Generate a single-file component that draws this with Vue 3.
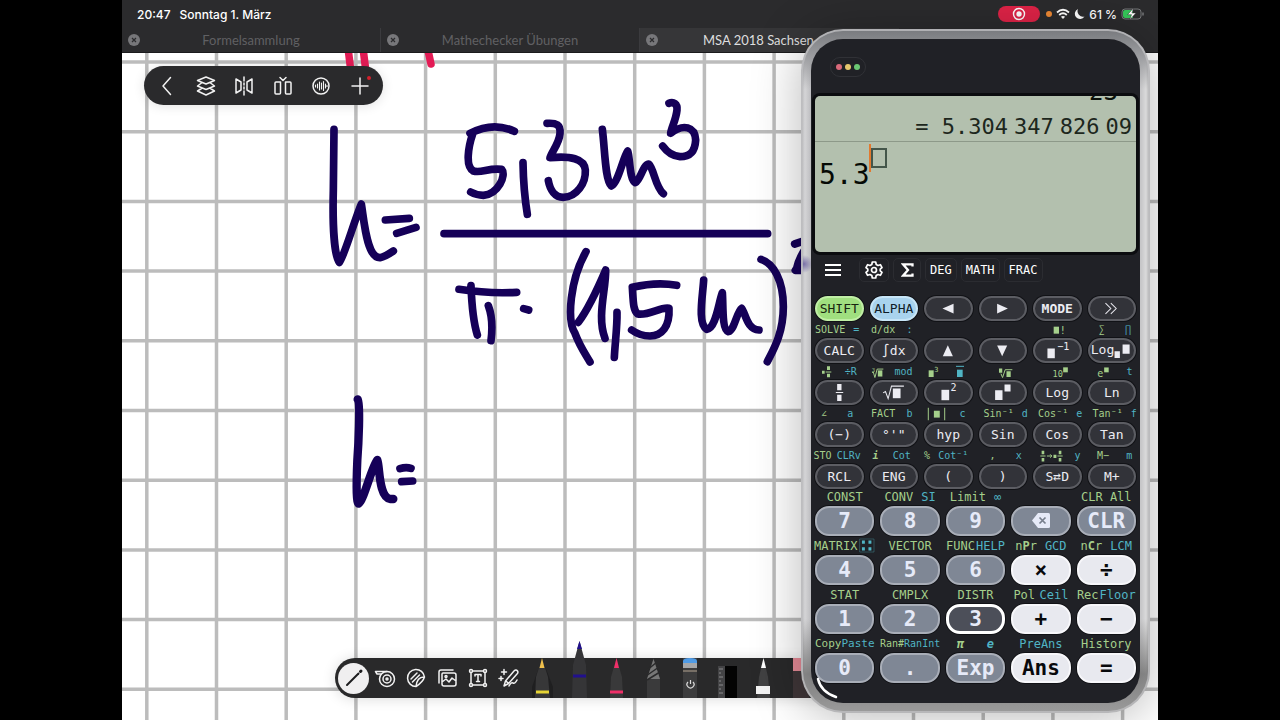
<script setup>
import { h, ref } from 'vue'

const box = (x, y, w, ht) => `M${x} ${y}h${w}v${ht}h${-w}z`

// Each glyph: view box, filled shapes, stroked shapes and small texts (three units per pixel).
const glyphs = {
  left: { v: [359, 34, 146, 74], f: 'M414 71L447 57V86z' },
  right: { v: [27, 34, 146, 74], f: 'M116 71L84 57V86z' },
  up: { v: [359, 158, 146, 74], f: 'M430 179L415 212H445z' },
  down: { v: [27, 158, 146, 74], f: 'M99 212L84 180H114z' },
  more: { v: [353, 34, 146, 74], s: 'M408 55L424 71L408 87M424 55L440 71L424 87' },
  frac: { v: [31, 283, 146, 74], f: box(97, 295, 13, 18) + box(97, 327, 13, 18), s: 'M93 320H115' },
  sqrt: { v: [195, 283, 146, 74], f: box(266, 308, 23, 29), s: 'M237 321L244 317L252 338L262 301H299' },
  square: { v: [359, 283, 146, 74], f: box(411, 312, 23, 31), t: [[438, 317, 30, '2']] },
  power: { v: [27, 283, 146, 74], f: box(78, 313, 22, 29) + box(106, 296, 18, 21) },
  inverse: { v: [190, 158, 146, 74], f: box(233, 189, 22, 29), t: [[262, 195, 30, '−1']] },
  logBase: { v: [353, 158, 146, 74], f: box(435, 197, 16, 20) + box(459, 177, 21, 28), t: [[364, 204, 39, 'Log']] },
  mixed: { v: [48, 236, 42, 42], f: box(60, 253, 8, 9) + box(75, 240, 9, 11) + box(75, 262, 9, 11), s: 'M71 257H88' },
  cbrt: { v: [210, 236, 40, 42], f: box(231, 252, 14, 19), s: 'M213 259L217 257L222 274L229 248H248', t: [[212, 256, 17, '3']] },
  cube: { v: [376, 236, 36, 42], f: box(378, 252, 15, 20), t: [[395, 257, 21, '3']] },
  mean: { v: [450, 236, 30, 42], f: box(456, 250, 17, 22), s: 'M453 240H477' },
  abs: { v: [370, 360, 58, 42], f: box(391, 371, 18, 21), s: 'M374 362V400M424 362V400' },
  factorial: { v: [242, 112, 42, 42], f: box(244, 123, 16, 21), t: [[262, 145, 30, '!']] },
  nroot: { v: [78, 236, 46, 42], f: box(81, 246, 10, 13) + box(104, 255, 13, 17), s: 'M87 262L92 274L100 250H122' },
  tenPow: { v: [238, 236, 50, 42], f: box(271, 243, 14, 15), t: [[239, 272, 26, '10']] },
  ePow: { v: [367, 236, 40, 42], f: box(389, 243, 14, 15), t: [[368, 272, 31, 'e']] },
  convert: {
    v: [204, 485, 70, 42],
    f: box(209, 490, 8, 11) + box(209, 512, 8, 11) + box(245, 502, 9, 10) + box(261, 490, 8, 11) + box(261, 512, 8, 11),
    s: 'M205 506H221M225 506H240M235 501L240 506L235 511M257 506H273'
  },
  matrix: {
    v: [160, 158, 52, 46],
    f: box(172, 166, 9, 10) + box(192, 166, 9, 10) + box(172, 186, 9, 10) + box(192, 186, 9, 10),
    s: 'M165 161H209V201H165z', sw: 1
  }
}

const Glyph = (props) => {
  if (props.name === 'erase') {
    return h('svg', { width: 20, height: 18, viewBox: '0 0 20 18', 'aria-hidden': 'true' }, [
      h('path', { d: 'M7 1H17.500Q19 1 19 2.500V14.500Q19 16 17.500 16H7L1 8.500z', fill: 'currentColor' }),
      h('path', { d: 'M8.500 5.500L14.500 11.500M14.500 5.500L8.500 11.500', stroke: '#777f8d', 'stroke-width': 1.700 })
    ])
  }
  const g = glyphs[props.name]
  return h('svg', { width: Math.round(g.v[2] / 3), height: Math.round(g.v[3] / 3), viewBox: g.v.join(' '), 'aria-hidden': 'true' }, [
    g.s && h('path', { d: g.s, fill: 'none', stroke: 'currentColor', 'stroke-width': g.sw || 3 }),
    g.f && h('path', { d: g.f, fill: 'currentColor' }),
    ...(g.t || []).map(([x, y, size, str]) => h('text', { x, y, 'font-size': size, fill: 'currentColor' }, str))
  ])
}
Glyph.props = ['name']

const fnRows = [
  [{ k: 'SHIFT', c: 'shift' }, { k: 'ALPHA', c: 'alpha' }, { g: 'left' }, { g: 'right' }, { k: 'MODE', c: 'strong' }, { g: 'more' }],
  [
    { k: 'CALC', s: 'SOLVE', a: '=' }, { k: '∫dx', s: 'd/dx', a: ':' }, { g: 'up' }, { g: 'down' },
    { g: 'inverse', sg: 'factorial' }, { g: 'logBase', s: '∑', a: '∏' }
  ],
  [
    { g: 'frac', sg: 'mixed', a: '÷R' }, { g: 'sqrt', sg: 'cbrt', a: 'mod' }, { g: 'square', sg: 'cube', ag: 'mean' },
    { g: 'power', sg: 'nroot' }, { k: 'Log', sg: 'tenPow' }, { k: 'Ln', sg: 'ePow', a: 't' }
  ],
  [
    { k: '(−)', s: '∠', a: 'a' }, { k: '°\'"', s: 'FACT', a: 'b' }, { k: 'hyp', sg: 'abs', a: 'c' },
    { k: 'Sin', s: 'Sin⁻¹', a: 'd' }, { k: 'Cos', s: 'Cos⁻¹', a: 'e' }, { k: 'Tan', s: 'Tan⁻¹', a: 'f' }
  ],
  [
    { k: 'RCL', s: 'STO', a: 'CLRv' }, { k: 'ENG', s: 'i', a: 'Cot', sc: 'italic' }, { k: '(', s: '%', a: 'Cot⁻¹' },
    { k: ')', s: ',', a: 'x' }, { k: 'S⇄D', sg: 'convert', a: 'y' }, { k: 'M+', s: 'M−', a: 'm' }
  ]
]
const fnKeys = fnRows.flat()

const numKeys = [
  { k: '7', s: 'CONST' }, { k: '8', s: 'CONV', a: 'SI' }, { k: '9', s: 'Limit', a: '∞' }, { g: 'erase' }, { k: 'CLR', s: 'CLR All' },
  { k: '4', s: 'MATRIX', ag: 'matrix', lc: 'tight' }, { k: '5', s: 'VECTOR' }, { k: '6', s: 'FUNC', a: 'HELP', lc: 'tight' },
  { k: '×', s: 'nPr', b: 'P', a: 'GCD', c: 'op' }, { k: '÷', s: 'nCr', b: 'C', a: 'LCM', c: 'op' },
  { k: '1', s: 'STAT' }, { k: '2', s: 'CMPLX' }, { k: '3', s: 'DISTR', c: 'pressed' },
  { k: '+', s: 'Pol', a: 'Ceil', c: 'op' }, { k: '−', s: 'Rec', a: 'Floor', c: 'op', lc: 'tight' },
  { k: '0', s: 'Copy', a: 'Paste', lc: 'mid' }, { k: '.', s: 'Ran#', a: 'RanInt', lc: 'small' },
  { k: 'Exp', s: 'π', a: 'e', sc: 'italic', ac: 'italic' }, { k: 'Ans', a: 'PreAns', c: 'op' }, { k: '=', s: 'History', c: 'op' }
]

const tabs = ref([
  { title: 'Formelsammlung', active: false },
  { title: 'Mathechecker Übungen', active: false },
  { title: 'MSA 2018 Sachsen', active: true }
])

const columns = Array.from({ length: 15 }, (_, i) => 146.8 + 69.7 * i)
const lines = Array.from({ length: 10 }, (_, i) => 62 + 69.7 * i)
</script>

<template>
  <div class="screen">
    <main class="tablet">
      <header class="status">
        <div class="clock"><span>20:47</span><span>Sonntag 1. März</span></div>
        <div class="indicators">
          <span class="rec">
            <svg width="14" height="14" viewBox="0 0 14 14"><circle cx="7" cy="7" r="5.500" fill="none" stroke="#fff" stroke-width="1.400" /><circle cx="7" cy="7" r="2.700" fill="#fff" /></svg>
          </span>
          <span class="mic"></span>
          <svg width="14" height="12" viewBox="0 0 14 12" fill="none" stroke="#fff" stroke-width="1.800">
            <path d="M1 4.500Q7 -1 13 4.500M3.200 7Q7 3.500 10.800 7" /><path d="M7 11L4.900 8.800Q7 7 9.100 8.800z" fill="#fff" stroke="none" />
          </svg>
          <svg width="11" height="12" viewBox="0 0 11 12"><path d="M4 1A5.200 5.200 0 1 0 10.500 8.500A5.500 5.500 0 0 1 4 1z" fill="#fff" /></svg>
          <span>61 %</span>
          <svg width="24" height="14" viewBox="0 0 24 14">
            <rect x="1" y="2" width="19" height="10" rx="3" fill="none" stroke="#77787a" /><path d="M22 5.500V8.500" stroke="#77787a" stroke-width="1.500" />
            <path d="M4 3H12V11H4Q2 11 2 9V5Q2 3 4 3z" fill="#35c759" /><path d="M12.500 1L6.500 7.700H10.500L8.500 13L15 6H11z" fill="#fff" stroke="#2c2c2e" stroke-width=".5" />
          </svg>
        </div>
      </header>

      <nav class="tabs" aria-label="Dokumente">
        <div v-for="t in tabs" :key="t.title" class="tab" :class="{ active: t.active }">
          <button class="close" :aria-label="t.title + ' schließen'">
            <svg width="12" height="12" viewBox="0 0 12 12"><circle cx="6" cy="6" r="6" fill="#77777a" /><path d="M4 4L8 8M8 4L4 8" stroke="#2c2c2e" stroke-width="1.200" /></svg>
          </button>
          <a href="#">{{ t.title }}</a>
        </div>
      </nav>

      <section class="canvas">
        <svg class="paper" viewBox="122 53 1036 667" preserveAspectRatio="xMinYMin slice" role="img" aria-label="h = 5,3 m³ / (π · (1,5 m)²)">
          <g stroke="#bcbcbc" stroke-width="3.500">
            <line v-for="x in columns" :key="'c' + x" :x1="x" :x2="x" y1="0" y2="1400" />
            <line v-for="y in lines" :key="'l' + y" :y1="y" :y2="y" x1="100" x2="2400" />
          </g>
          <g fill="none" stroke="#e31b55" stroke-width="7.500" stroke-linecap="round">
            <path d="M348 48L351 72M363 48L366 72M427.500 48L431 64" />
          </g>
          <g fill="none" stroke="#150058" stroke-width="23" stroke-linecap="round" stroke-linejoin="round">
            <g transform="translate(310 90) scale(.33333)">
              <path d="M72 118L70 300C67 420 75 500 88 517C104 496 130 400 154 342C162 390 170 505 210 503Q225 500 250 483" />
              <path d="M226 390L298 385M260 430L318 412" />
              <path d="M480 130Q550 94 613 124M488 132C475 170 465 230 490 243C515 250 535 233 575 238C590 255 565 312 520 316Q500 316 482 306" />
              <path d="M639 218C640 280 645 330 652 373M402 431H1373" />
              <path d="M447 598Q540 612 620 607M483 587C485 640 488 690 502 735M535 647Q551 690 543 752M641 656L656 660" />
            </g>
            <g transform="translate(540 90) scale(.33333)">
              <path d="M21 100C50 98 62 105 60 130C58 160 35 185 30 203C90 197 133 205 136 240C138 280 110 321 70 322C45 322 30 300 25 272" />
              <path d="M187 118C195 180 195 270 214 288C234 280 250 200 263 183C270 200 268 270 286 278C302 270 308 225 326 222C342 235 345 290 370 311" />
              <path d="M387 40C400 34 413 42 411 60C408 90 395 110 392 130C430 100 465 110 467 150C465 190 445 200 420 200Q390 198 368 168" />
              <path d="M138 485C90 570 80 690 105 730C120 770 135 790 150 816" />
              <path d="M115 697C150 650 180 580 197 540C198 600 170 680 195 745M231 667C232 710 225 760 223 802" />
              <path d="M277 592Q350 575 410 586M277 592C280 640 280 662 293 672C330 677 360 650 387 655C390 710 365 738 330 738Q300 738 275 720" />
              <path d="M491 570C488 620 472 700 500 718C528 715 535 640 547 608C550 640 545 720 565 725C584 720 590 665 605 655C617 670 620 718 657 720" />
              <path d="M663 508C700 520 730 570 730 650C730 730 700 780 682 815" />
              <path d="M764 462L800 450V470Q776 505 770 535L766 541H800" />
            </g>
            <g transform="translate(330 380) scale(.33333)" stroke-width="25">
              <path d="M83 58C92 70 85 200 82 240C78 330 80 370 86 371C100 365 125 260 142 240C150 260 145 350 180 357L190 357" />
              <path d="M210 266Q228 260 243 265M215 305L248 303" stroke-width="23" />
            </g>
          </g>
        </svg>

        <div class="pill" role="toolbar" aria-label="Ansicht">
          <button aria-label="Zurück"><svg width="20" height="20" viewBox="0 0 20 20"><path d="M13.500 1.500L6 10L13.500 18.500" /></svg></button>
          <button aria-label="Ebenen"><svg width="20" height="20" viewBox="0 0 20 20"><path d="M10 1L18.500 4.500L10 8L1.500 4.500zM5.500 7L1.500 10L10 13.500L18.500 10L14.500 7M5.500 12.500L1.500 15L10 19L18.500 15L14.500 12.500" /></svg></button>
          <button aria-label="Spiegeln"><svg width="20" height="20" viewBox="0 0 20 20"><path d="M2 3L7 6V14L2 17zM18 3L13 6V14L18 17zM10 1V5M10 7V9M10 11V13M10 15V19" /></svg></button>
          <button aria-label="Teilen"><svg width="20" height="20" viewBox="0 0 20 20"><path d="M3 6H7.500V17Q7.500 18 6.500 18H3Q2 18 2 17V7Q2 6 3 6zM12.500 6H17Q18 6 18 7V17Q18 18 17 18H13.500Q12.500 18 12.500 17zM7 1.500L10 4.500L13 1.500" /></svg></button>
          <button aria-label="Audio"><svg width="20" height="20" viewBox="0 0 20 20"><circle cx="10" cy="10" r="8" /><path d="M4.500 9V11M6.500 8V12M8.500 6V14M10.500 7V13M12.500 5.500V14.500M14.500 8V12M16 9.500V10.500" stroke-width="1.100" /></svg></button>
          <button aria-label="Hinzufügen" class="plus"><svg width="20" height="20" viewBox="0 0 20 20"><path d="M10 2V18M2 10H18" /></svg></button>
        </div>

        <div class="dock" role="toolbar" aria-label="Werkzeuge">
          <div class="tools">
            <button class="current" aria-label="Stift"><svg width="20" height="20" viewBox="0 0 20 20"><path d="M3 17L14.500 5.500" stroke="#1c1c1e" stroke-width="2" /><path d="M16.500 3.500L17 3" stroke="#1c1c1e" stroke-width="3" /></svg></button>
            <button aria-label="Klebeband"><svg width="22" height="20" viewBox="0 0 22 20"><circle cx="13" cy="11" r="7.500" /><circle cx="13" cy="11" r="4" /><circle cx="13" cy="11" r="1" /><path d="M13 3.500H1.500L3 6H7" /></svg></button>
            <button aria-label="Sticker"><svg width="22" height="20" viewBox="0 0 22 20"><path d="M11 18.500A8.500 8.500 0 1 1 19.500 9Q18 14 11 18.500zM19.500 9Q12 8.500 11 18.500M6 11L12 5M7.500 14L14.500 7" /></svg></button>
            <button aria-label="Bild"><svg width="22" height="20" viewBox="0 0 22 20"><path d="M7 5H18Q20 5 20 7V16Q20 18 18 18H8Q6 18 6 16V6Q6 5 7 5zM3 15V4Q3 2 5 2H17M6 14L10 11L13 14L16 10L20 13" /><circle cx="10" cy="8.500" r="1" /></svg></button>
            <button aria-label="Text"><svg width="22" height="20" viewBox="0 0 22 20"><path d="M5 3H17M5 17H17M4 4V16M18 4V16M8 8V6.500H14V8M11 6.500V13.500M9.500 13.500H12.500" /><circle cx="4" cy="3" r="1.500" fill="#29292a" /><circle cx="18" cy="3" r="1.500" fill="#29292a" /><circle cx="4" cy="17" r="1.500" fill="#29292a" /><circle cx="18" cy="17" r="1.500" fill="#29292a" /></svg></button>
            <button aria-label="Zauberstift"><svg width="22" height="20" viewBox="0 0 22 20"><path d="M6 18L7.500 13L16 3Q18 1 19.500 3Q20.500 4.500 19 6L10.500 15.500zM8 13L10.500 15.500M11 18Q13 14 15 15Q17 16 19 12M6 1.500V6.500M3.500 4H8.500M3 8.500V12.500M1 10.500H5" /></svg></button>
          </div>
          <div class="pens">
            <button aria-label="Gelber Stift"><svg viewBox="0 0 37 57" width="37" height="57"><path d="M18 18L8 46V57H29V46z" fill="#1f1f20" /><path d="M12 36L18 17L24 36L26 57H11z" fill="#373738" /><path d="M18 17L15.500 27H20.500z" fill="#f0c04c" /><path d="M12 51H25" stroke="#e6d435" stroke-width="3" /></svg></button>
            <button aria-label="Blauer Stift"><svg viewBox="0 0 37 57" width="37" height="57"><path d="M18.500 0L25 24L26 57H11L12 24z" fill="#353537" /><path d="M18.500 0L21 8H16z" fill="#21108c" /><path d="M12 35H25" stroke="#21108c" stroke-width="3" /></svg></button>
            <button aria-label="Roter Stift"><svg viewBox="0 0 37 57" width="37" height="57"><path d="M18.500 17L24 36L25 57H12L13 36z" fill="#39393a" /><path d="M18.500 17L21 27H16z" fill="#ef2f68" /><path d="M12 51H25" stroke="#ef2f68" stroke-width="3" /></svg></button>
            <button aria-label="Bleistift"><svg viewBox="0 0 37 57" width="37" height="57"><path d="M18.500 17L25 38V57H12V38z" fill="#3a3a3b" /><path d="M18.500 18L25 38H12z" fill="#777" /><path d="M11 30L22 21M11 35L24 26M12 39L25 31" stroke="#2a2a2b" stroke-width="1.500" /></svg></button>
            <button aria-label="Radierer"><svg viewBox="0 0 37 57" width="37" height="57"><path d="M11 17H25V57H11z" fill="#3c3c3d" /><path d="M11 20Q11 17 18 17Q25 17 25 20V24H11z" fill="#4f9be6" /><path d="M11 22H25V27H11z" fill="#a6a7a9" /><path d="M11 30H25" stroke="#8b8175" stroke-width="1.500" /><path d="M16 41A3.500 3.500 0 1 0 21 41M18.500 39V43" stroke="#ddd" fill="none" stroke-width="1.200" /></svg></button>
            <button aria-label="Lineal"><svg viewBox="0 0 37 57" width="37" height="57"><path d="M9 25H16V57H9z" fill="#434345" /><path d="M16 25H28V57H16z" fill="#030303" /><path d="M10 28H14M10 32H12M10 36H14M10 40H12M10 44H14M10 48H12M10 52H14" stroke="#8a8a8c" /></svg></button>
            <button aria-label="Weißer Stift"><svg viewBox="0 0 37 57" width="37" height="57"><path d="M17.500 17L22 36L24 57H11L13 36z" fill="#414142" /><path d="M17.500 17L20 27H15z" fill="#fff" /><path d="M10 45H24V53H10z" fill="#f3f3f3" /></svg></button>
            <button aria-label="Rosa Marker"><svg viewBox="0 0 37 57" width="37" height="57"><path d="M10 17H26V57H10z" fill="#3f3638" /><path d="M10 17H26V30H10z" fill="#e58a96" /></svg></button>
          </div>
        </div>
      </section>

      <section class="calculator" aria-label="Rechner">
        <div class="body">
          <div class="titlebar"><div class="dots"><i class="red"></i><i class="yellow"></i><i class="green"></i></div></div>
          <div class="lcd">
            <div class="previous">23</div>
            <div class="result"><span>= 5.304</span><span>347</span><span>826</span><span>09</span></div>
            <div class="entry"><span>5.3</span><i class="cursor"></i><i class="slot"></i></div>
          </div>
          <div class="modes">
            <button class="menu" aria-label="Menü"><svg width="16" height="14" viewBox="0 0 16 14"><path d="M0 2H16M0 7H16M0 12H16" stroke="#fff" stroke-width="2" /></svg></button>
            <button class="gear" aria-label="Einstellungen"><svg width="18" height="18" viewBox="0 0 18 18" fill="none" stroke="#fff" stroke-width="1.700" stroke-linejoin="round"><path d="M7.300 1H10.700L11.200 3.500L13 4.500L15.400 3.700L17 6.600L15.200 8.200V9.800L17 11.400L15.400 14.300L13 13.500L11.200 14.500L10.700 17H7.300L6.800 14.500L5 13.500L2.600 14.300L1 11.400L2.800 9.800V8.200L1 6.600L2.600 3.700L5 4.500L6.800 3.500z" /><circle cx="9" cy="9" r="2.500" /></svg></button>
            <button class="sum" aria-label="Summe"><svg width="13" height="14" viewBox="0 0 13 14"><path d="M11.500 3.500V1.300H2L7 7L2 12.700H11.500V10.500" fill="none" stroke="#fff" stroke-width="2.300" /></svg></button>
            <button>DEG</button><button>MATH</button><button>FRAC</button>
          </div>
          <div class="fn">
            <div v-for="(key, i) in fnKeys" :key="i" class="cell">
              <div v-if="i > 5" class="labels">
                <span v-if="key.s || key.sg" class="s" :class="key.sc"><Glyph v-if="key.sg" :name="key.sg" />{{ key.s }}</span>
                <span v-if="key.a || key.ag" class="a"><Glyph v-if="key.ag" :name="key.ag" />{{ key.a }}</span>
              </div>
              <button class="key" :class="key.c" :aria-label="key.k || key.g"><Glyph v-if="key.g" class="face" :name="key.g" />{{ key.k }}</button>
            </div>
          </div>
          <div class="num">
            <div v-for="(key, i) in numKeys" :key="i" class="cell">
              <div class="labels" :class="key.lc">
                <span v-if="key.b" class="s">n<b>{{ key.b }}</b>r</span>
                <span v-else-if="key.s" class="s" :class="key.sc">{{ key.s }}</span>
                <span v-if="key.a || key.ag" class="a" :class="key.ac"><Glyph v-if="key.ag" :name="key.ag" />{{ key.a }}</span>
              </div>
              <button class="key" :class="key.c" :aria-label="key.k || key.g"><Glyph v-if="key.g" :name="key.g" />{{ key.k }}</button>
            </div>
          </div>
        </div>
        <svg class="grip" width="24" height="24" viewBox="0 0 24 24"><path d="M3 3Q6 16 21 21" fill="none" stroke="#fff" stroke-width="2.500" stroke-linecap="round" /></svg>
      </section>
    </main>
  </div>
</template>

<style>
html, body { margin: 0; background: #000; }
</style>

<style scoped>
* { box-sizing: border-box; }
button { padding: 0; border: 0; background: none; color: inherit; font: inherit; display: grid; place-items: center; }
svg { display: block; }
.screen { min-height: 100vh; display: flex; padding: 0 122px; background: #000; }
.tablet { position: relative; flex: 1; display: flex; flex-direction: column; overflow: hidden; background: #2b2b2d; font-family: Inter, "Liberation Sans", sans-serif; color: #fff; }
.status { height: 28px; padding: 0 13px 0 15px; display: flex; justify-content: space-between; align-items: center; font-size: 12px; font-weight: 500; }
.clock { display: flex; gap: 9px; }
.indicators { display: flex; align-items: center; gap: 4px; }
.rec { width: 42px; height: 16px; border-radius: 8px; background: #df2347; display: grid; place-items: center; margin-right: 2px; }
.mic { width: 6px; height: 6px; border-radius: 50%; background: #ef8a35; }
.tabs { height: 25px; display: grid; grid-template-columns: repeat(4, 1fr); border-bottom: 1px solid #1b1b1d; font-family: Lato, sans-serif; font-size: 13px; }
.tab { position: relative; display: flex; align-items: center; justify-content: center; color: #606063; border-right: 1px solid #3b3b3e; }
.tab a { color: inherit; text-decoration: none; }
.tab.active { background: #363638; color: #dededf; justify-content: flex-start; padding-left: 63px; border: 0; }
.close { position: absolute; left: 6px; top: 6px; }
.canvas { position: relative; flex: 1; overflow: hidden; background: #fff; }
.paper { position: absolute; inset: 0; width: 100%; height: 100%; }
.pill { position: absolute; left: 22px; top: 13px; width: 239px; height: 39px; padding: 0 4px; display: flex; align-items: center; justify-content: space-between; border-radius: 20px; background: #2a2a2c; box-shadow: 0 1px 12px rgba(0, 0, 0, .12); }
.pill button { width: 38px; height: 39px; }
.pill svg, .tools svg { fill: none; stroke: #f2f2f2; stroke-width: 1.5; stroke-linejoin: round; stroke-linecap: round; }
.plus { position: relative; }
.plus::after { content: ""; position: absolute; right: 8px; top: 10px; width: 4px; height: 4px; border-radius: 50%; background: #d3202c; }
.dock { position: absolute; left: 213px; right: 300px; bottom: 22px; height: 40px; padding-left: 3px; display: flex; align-items: flex-end; border-radius: 20px 0 0 20px; background: #29292a; box-shadow: 0 1px 14px rgba(0, 0, 0, .14); }
.tools { height: 40px; display: flex; align-items: center; }
.tools button { width: 31px; height: 31px; border-radius: 50%; }
.tools .current { background: #f0eff0; }
.pens { display: flex; align-items: flex-end; }
.calculator { position: absolute; right: 8px; top: 29px; width: 349px; padding: 10px; border-radius: 42px; font-family: "DejaVu Sans Mono", monospace;
  background: radial-gradient(circle at 3px 235px, rgba(64, 48, 140, .6), rgba(64, 48, 140, 0) 9px), linear-gradient(180deg, #77797d 0, #9a9b9e 26px, rgba(200, 200, 203, 0) 60px, rgba(190, 190, 190, 0) 590px, rgba(110, 110, 110, .8) 645px, #9b9b9b 100%), linear-gradient(90deg, #b5b5b8, #d4d4d6 4px, #bdbdc0 10px, #c6c6c8 340px, #dadadb 345px, #aaa);
  box-shadow: 0 4px 50px rgba(0, 0, 0, .28), inset 0 0 0 2px rgba(190, 190, 192, .8); }
.body { padding: 0 4px 20px; border-radius: 32px; background: #202126; }
.titlebar { height: 57px; padding: 18px 15px; display: flex; }
.dots { width: 36px; height: 20px; border: 1px solid #303136; border-radius: 10px; display: flex; align-items: center; justify-content: center; gap: 3px; }
.dots i { width: 6px; height: 6px; border-radius: 50%; }
.red { background: #d8697a; }
.yellow { background: #e5c66d; }
.green { background: #6bc873; }
.lcd { height: 156px; overflow: hidden; display: flow-root; border-radius: 5px; background: #b3c0ae; box-shadow: 0 0 0 3px #0b0c0f; color: #1d271d; }
.previous { margin-top: -18px; padding-right: 18px; text-align: right; font-size: 24px; line-height: 28px; color: #0b120b; }
.result { display: flex; justify-content: flex-end; gap: 6px; padding: 6px 4px 0 0; font-size: 22px; line-height: 29px; border-bottom: 1px solid #8d9989; white-space: pre; }
.entry { display: flex; align-items: flex-start; padding: 0 4px; font-size: 28px; color: #050a05; }
.entry span { line-height: 34px; margin-top: 16px; }
.cursor { width: 2px; height: 28px; margin: 2px 0 0 -1px; background: #e2792f; }
.slot { width: 16px; height: 20px; margin-top: 6px; border: 2px solid #44564a; }
.modes { height: 44px; padding: 6px 0 14px 10px; display: flex; align-items: stretch; gap: 4px; font-size: 12px; color: #fff; }
.modes button { padding: 0 4px; border: 1px solid #2b2c31; border-radius: 5px; }
.modes .menu { width: 16px; padding: 0; border: 0; margin-right: 14px; }
.modes .gear { width: 30px; padding: 0; }
.modes .sum { width: 28px; padding: 0; }
.fn { height: 191px; display: grid; grid-template-columns: repeat(6, 1fr); grid-template-rows: 25px repeat(4, 1fr); column-gap: 6px; }
.cell { min-width: 0; display: flex; flex-direction: column; }
.labels { flex: 1; display: flex; align-items: center; justify-content: space-around; white-space: nowrap; font-size: 10px; line-height: 16px; }
.fn .labels { margin-left: -4px; padding-top: 1px; }
.fn .cell:nth-child(6n + 4) .labels, .fn .cell:nth-child(6n + 5) .labels, .fn .cell:nth-child(6n) .labels { margin-left: 1px; margin-right: -5px; }
.s { color: #a5cf8b; }
.a { color: #50b4c4; }
.italic { font-weight: 700; font-style: italic; }
.key { width: 100%; flex: none; height: 25px; border: 2px solid #5c5d63; border-radius: 13px; background: #323339; color: #ececf2; font-size: 13px; line-height: 20px; box-shadow: 0 0 0 1px #111216; }
.face { margin: -2px -3px; }
.key.shift { background: #a0df7f; border-color: #c0efa5; color: #17240f; }
.key.alpha { background: #a9d3ee; border-color: #c8e6f8; color: #101d28; }
.key.strong { font-weight: 700; }
.num { display: grid; grid-template-columns: repeat(5, 1fr); column-gap: 6px; }
.num .labels { flex: none; height: 19px; font-size: 12px; }
.num .labels.tight { justify-content: center; gap: 1px; }
.num .labels.mid { justify-content: center; font-size: 11px; }
.num .labels.small { justify-content: center; font-size: 10px; }
.num .key { height: 30px; border-radius: 14px; border-color: #a9aeb8; background: #7f8795; color: #e6eaf8; font-size: 21px; font-weight: 700; line-height: 26px; }
.num .key.op { background: #e8e9ef; border-color: #f7f7fa; color: #08090c; }
.num .key.pressed { background: #4c4f59; border: 3px solid #fff; line-height: 24px; }
.grip { position: absolute; left: 14px; bottom: 13px; }
</style>
